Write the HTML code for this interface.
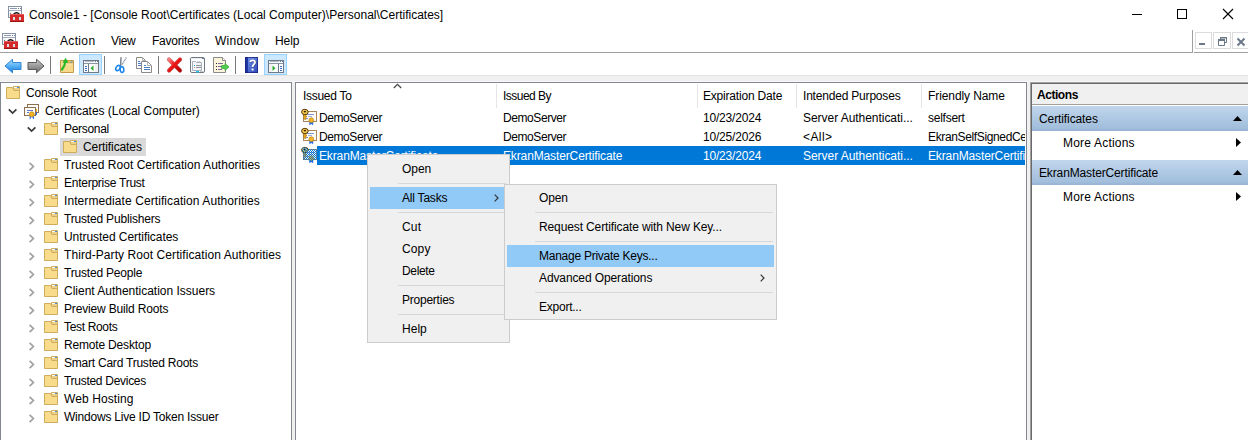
<!DOCTYPE html>
<html><head><meta charset="utf-8">
<style>
*{margin:0;padding:0;box-sizing:border-box}
html,body{width:1248px;height:440px;overflow:hidden;background:#fff;font-family:"Liberation Sans",sans-serif;font-size:12px;color:#000}
.a{position:absolute}
.t{position:absolute;white-space:nowrap;line-height:18px;height:18px}
svg{position:absolute;overflow:visible}
</style></head><body>

<!-- TITLE BAR -->
<div class="a" style="left:0;top:0;width:1248px;height:30px;background:#fff"></div>
<svg id="appicon" style="left:8px;top:6px" width="16" height="17" viewBox="0 0 16 17">
  <rect x="0.5" y="0.5" width="13" height="11" fill="#fff" stroke="#8693a4"/>
  <rect x="2" y="2" width="7" height="1" fill="#8e9aab"/>
  <rect x="10" y="2" width="1" height="1" fill="#6e7a8c"/>
  <rect x="12" y="2" width="1" height="1" fill="#6e7a8c"/>
  <rect x="1" y="4" width="12" height="1" fill="#a4aebc"/>
  <rect x="1" y="5" width="3" height="6" fill="#f0f2f5"/>
  <rect x="2" y="7" width="1" height="1" fill="#6e7a8c"/>
  <path d="M5.5 8.5 Q8.5 5 11.5 8.5" stroke="#111" stroke-width="1.5" fill="none"/>
  <rect x="2" y="8" width="14" height="8" fill="#d42a2a"/>
  <rect x="2" y="8" width="14" height="1" fill="#e85a5a"/>
  <rect x="2" y="15" width="14" height="1" fill="#9a1414"/>
  <rect x="5" y="11" width="2" height="3" fill="#d8e0e0"/>
  <rect x="11" y="11" width="2" height="3" fill="#d8e0e0"/>
</svg>
<div class="t" style="left:29px;top:6px">Console1 - [Console Root\Certificates (Local Computer)\Personal\Certificates]</div>
<div class="a" style="left:1132px;top:14px;width:10px;height:1px;background:#000"></div>
<div class="a" style="left:1177px;top:9px;width:10px;height:10px;border:1px solid #000"></div>
<svg style="left:1223px;top:9px" width="10" height="10" viewBox="0 0 10 10"><path d="M0 0L10 10M10 0L0 10" stroke="#000" stroke-width="1.1"/></svg>

<!-- MENU BAR -->
<svg style="left:2px;top:33px" width="16" height="17" viewBox="0 0 16 17">
  <rect x="0.5" y="0.5" width="13" height="11" fill="#fff" stroke="#8693a4"/>
  <rect x="2" y="2" width="7" height="1" fill="#8e9aab"/>
  <rect x="10" y="2" width="1" height="1" fill="#6e7a8c"/>
  <rect x="12" y="2" width="1" height="1" fill="#6e7a8c"/>
  <rect x="1" y="4" width="12" height="1" fill="#a4aebc"/>
  <rect x="1" y="5" width="3" height="6" fill="#f0f2f5"/>
  <rect x="2" y="7" width="1" height="1" fill="#6e7a8c"/>
  <path d="M5.5 8.5 Q8.5 5 11.5 8.5" stroke="#111" stroke-width="1.5" fill="none"/>
  <rect x="2" y="8" width="14" height="8" fill="#d42a2a"/>
  <rect x="2" y="8" width="14" height="1" fill="#e85a5a"/>
  <rect x="2" y="15" width="14" height="1" fill="#9a1414"/>
  <rect x="5" y="11" width="2" height="3" fill="#d8e0e0"/>
  <rect x="11" y="11" width="2" height="3" fill="#d8e0e0"/>
</svg>
<div class="t" style="left:26px;top:32px;letter-spacing:-0.267px">File</div>
<div class="t" style="left:60px;top:32px;letter-spacing:0.34px">Action</div>
<div class="t" style="left:111px;top:32px;letter-spacing:-0.367px">View</div>
<div class="t" style="left:152px;top:32px;letter-spacing:-0.238px">Favorites</div>
<div class="t" style="left:215px;top:32px;letter-spacing:0.28px">Window</div>
<div class="t" style="left:275px;top:32px;letter-spacing:-0.067px">Help</div>
<div class="a" style="left:0;top:52px;width:1192px;height:1px;background:#a0a0a0"></div>
<div class="a" style="left:1192px;top:30px;width:1px;height:23px;background:#a0a0a0"></div>
<div class="a" style="left:1194px;top:52px;width:54px;height:1px;background:#a0a0a0"></div>
<!-- MDI buttons -->
<div class="a" style="left:1195px;top:32px;width:17px;height:17px;border:1px solid #dcdcdc;background:#fff"></div>
<div class="a" style="left:1213px;top:32px;width:18px;height:17px;border:1px solid #dcdcdc;background:#fff"></div>
<div class="a" style="left:1232px;top:32px;width:18px;height:17px;border:1px solid #dcdcdc;background:#fff"></div>
<div class="a" style="left:1199px;top:43px;width:6px;height:2px;background:#6b7888"></div>
<svg style="left:1218px;top:37px" width="9" height="9" viewBox="0 0 9 9"><path d="M2.5 2.5V0.5H8.5V5.5H6.5M0.5 2.5H6.5V8.5H0.5Z" stroke="#6b7888" fill="none"/><rect x="0" y="2" width="7" height="2" fill="#6b7888"/><rect x="2" y="0" width="7" height="1.5" fill="#6b7888"/></svg>
<svg style="left:1237px;top:38px" width="8" height="8" viewBox="0 0 8 8"><path d="M0.5 0.5L7.5 7.5M7.5 0.5L0.5 7.5" stroke="#6b7888" stroke-width="2"/></svg>

<!-- TOOLBAR -->
<div class="a" style="left:0;top:53px;width:1248px;height:22px;background:#fff"></div>
<div class="a" style="left:0;top:75px;width:1248px;height:1px;background:#e3e3e3"></div>
<div class="a" style="left:0;top:76px;width:1248px;height:364px;background:#f0f0f0"></div>

<!-- toolbar icons -->
<svg style="left:4px;top:58px" width="18" height="16" viewBox="0 0 18 16"><defs><linearGradient id="gb" x1="0" y1="0" x2="0" y2="1"><stop offset="0" stop-color="#b4e2ff"/><stop offset="0.5" stop-color="#55b0f5"/><stop offset="1" stop-color="#1a7ad8"/></linearGradient></defs><path d="M1 8L8.5 1.2V4.5H17V11.5H8.5V14.8Z" fill="url(#gb)" stroke="#2f86d6" stroke-linejoin="round"/></svg>
<svg style="left:27px;top:58px" width="18" height="16" viewBox="0 0 18 16"><defs><linearGradient id="gg" x1="0" y1="0" x2="0" y2="1"><stop offset="0" stop-color="#d0d0d0"/><stop offset="0.5" stop-color="#9a9a9a"/><stop offset="1" stop-color="#6a6a6a"/></linearGradient></defs><path d="M17 8L9.5 1.2V4.5H1V11.5H9.5V14.8Z" fill="url(#gg)" stroke="#5a5a5a" stroke-linejoin="round"/></svg>
<div class="a" style="left:50px;top:56px;width:1px;height:18px;background:#7a7a7a"></div>
<svg style="left:59px;top:57px" width="16" height="17" viewBox="0 0 16 17"><path d="M7.5 3.5H14.5V8H7.5Z" fill="#e9c66a" stroke="#c49c48"/><rect x="11.5" y="4.5" width="2" height="1.3" fill="#3a8ee6"/><path d="M1.5 3.5H6.5L8 6H14.5V15.5H1.5Z" fill="#f6d98a" stroke="#c49c48"/><path d="M2 7H14" stroke="#fbe7ae"/><path d="M3 12.5C4.5 10.5 6 8.5 6.2 5.2" stroke="#2ab82a" stroke-width="2.2" fill="none" stroke-linecap="round"/><path d="M3.5 5.8L6.6 0.8L9.5 5.8Z" fill="#2ab82a"/></svg>
<div class="a" style="left:79px;top:54px;width:23px;height:21px;background:#cce8ff;border:1px solid #99d1ff"></div>
<svg style="left:83px;top:60px" width="16" height="13" viewBox="0 0 16 13"><rect x="0.5" y="0.5" width="15" height="12" fill="#f2f2f2" stroke="#6e7a8a"/><rect x="1" y="1" width="14" height="2" fill="#f6f7f9"/><rect x="2" y="1" width="9" height="1" fill="#b4bcc8"/><rect x="12" y="1" width="1" height="1" fill="#6e7a8a"/><rect x="14" y="1" width="1" height="1" fill="#6e7a8a"/><path d="M1 3.5H15" stroke="#8a95a4"/><rect x="1" y="4" width="4" height="8" fill="#fff"/><path d="M5.5 4V12" stroke="#6e7a8a"/><rect x="6" y="4" width="6" height="8" fill="#fff"/><rect x="2" y="6" width="2" height="1" fill="#3d6ab8"/><rect x="2" y="8" width="2" height="1" fill="#3d6ab8"/><rect x="2" y="10" width="2" height="1" fill="#3d6ab8"/><path d="M10.5 5.5L7.5 8.2L10.5 11Z" fill="#2aaa2a"/></svg>
<div class="a" style="left:104px;top:56px;width:1px;height:18px;background:#7a7a7a"></div>
<svg style="left:114px;top:56px" width="14" height="18" viewBox="0 0 14 18"><path d="M7 1.2L6.6 10" stroke="#7c8590" stroke-width="1.5"/><path d="M12.4 1.5L7.5 9.5" stroke="#8898b0" stroke-width="1.5" stroke-dasharray="1 0.6"/><ellipse cx="4" cy="12" rx="1.9" ry="2.8" transform="rotate(35 4 12)" fill="#fff" stroke="#1a86ec" stroke-width="1.6"/><ellipse cx="8" cy="13.6" rx="1.8" ry="2.9" transform="rotate(-5 8 13.6)" fill="#fff" stroke="#1a86ec" stroke-width="1.6"/></svg>
<svg style="left:136px;top:57px" width="17" height="17" viewBox="0 0 17 17"><path d="M0.5 0.5H6.5L9.5 3.5V11.5H0.5Z" fill="#fff" stroke="#8a8a8a"/><path d="M6.5 0.5V3.5H9.5" fill="none" stroke="#b0b0b0"/><rect x="2" y="4" width="2" height="1" fill="#4a80c8"/><rect x="2" y="6" width="5" height="1" fill="#4a80c8"/><rect x="2" y="8" width="5" height="1" fill="#4a80c8"/><path d="M5.5 4.5H11.5L15.5 8.5V15.5H5.5Z" fill="#fff" stroke="#8a8a8a"/><path d="M11.5 4.5V8.5H15.5" fill="none" stroke="#b0b0b0"/><rect x="8" y="8" width="2" height="1" fill="#4a80c8"/><rect x="8" y="10" width="6" height="1" fill="#4a80c8"/><rect x="8" y="12" width="6" height="1" fill="#4a80c8"/></svg>
<div class="a" style="left:158px;top:56px;width:1px;height:18px;background:#7a7a7a"></div>
<svg style="left:166px;top:57px" width="17" height="16" viewBox="0 0 17 16"><defs><linearGradient id="gx" x1="0" y1="0" x2="1" y2="1"><stop offset="0" stop-color="#ff7a7a"/><stop offset="0.45" stop-color="#f01818"/><stop offset="1" stop-color="#b00000"/></linearGradient></defs><path d="M3 2.5L14 13.5M14 2.5L3 13.5" stroke="#8a0a0a" stroke-opacity="0.55" stroke-width="4.2" stroke-linecap="round"/><path d="M3 2.5L14 13.5M14 2.5L3 13.5" stroke="url(#gx)" stroke-width="3.2" stroke-linecap="round"/></svg>
<svg style="left:190px;top:57px" width="16" height="17" viewBox="0 0 16 17"><rect x="0.5" y="0.5" width="14" height="15" rx="1.5" fill="#fff" stroke="#6f7780"/><rect x="1" y="1" width="13" height="1" fill="#e8ecf0"/><rect x="12" y="1" width="2" height="1" fill="#5a7aa0"/><path d="M2.5 4.5H5.5L6.5 5.5H11.5V13.5H2.5Z" fill="#f4f6f8" stroke="#a8b0bc"/><rect x="7" y="4" width="1.5" height="1" fill="#c8ced6"/><rect x="9" y="4" width="1.5" height="1" fill="#c8ced6"/><rect x="4" y="8" width="1" height="1" fill="#1ab0f0"/><rect x="6" y="8" width="5" height="1" fill="#8a929c"/><rect x="4" y="10" width="1" height="1" fill="#9a8a8a"/><rect x="6" y="10" width="5" height="1" fill="#8a929c"/><rect x="6" y="14" width="3" height="1.5" fill="#20c0f8"/><rect x="10" y="14" width="3" height="1" fill="#c8c8c8"/></svg>
<svg style="left:213px;top:57px" width="17" height="17" viewBox="0 0 17 17"><path d="M0.5 0.5H9.5L12.5 3.5V15.5H0.5Z" fill="#fcf5dc" stroke="#8a8a86"/><path d="M9.5 0.5V3.5H12.5" fill="#fff" stroke="#8a8a86"/><rect x="3" y="6" width="1" height="1" fill="#2a2a2a"/><rect x="3" y="9" width="1" height="1" fill="#2a2a2a"/><rect x="3" y="12" width="1" height="1" fill="#2a2a2a"/><rect x="5" y="6" width="5" height="1" fill="#7a6aa0"/><rect x="5" y="9" width="4" height="1" fill="#7a6aa0"/><rect x="5" y="12" width="4" height="1" fill="#7a6aa0"/><path d="M8.5 8.5H12V6.5L16 10L12 13.5V11.5H8.5Z" fill="#52cc52" stroke="#34a834" stroke-width="0.7"/></svg>
<div class="a" style="left:235px;top:56px;width:1px;height:18px;background:#7a7a7a"></div>
<svg style="left:245px;top:57px" width="13" height="16" viewBox="0 0 13 16"><defs><linearGradient id="gh" x1="0" y1="0" x2="1" y2="1"><stop offset="0" stop-color="#7a98ec"/><stop offset="1" stop-color="#2a48b8"/></linearGradient></defs><rect x="0" y="0" width="13" height="16" fill="url(#gh)"/><rect x="0" y="0" width="3" height="16" fill="#1e36a0"/><rect x="0.5" y="0.5" width="12" height="15" fill="none" stroke="#14207a" stroke-opacity="0.7"/><path d="M5.3 5C5.3 2.8 10 2.6 10 5.3C10 7.5 7.6 7.5 7.6 10" stroke="#3a4a90" stroke-width="1.9" fill="none" transform="translate(0.6 0.5)"/><path d="M5.3 5C5.3 2.8 10 2.6 10 5.3C10 7.5 7.6 7.5 7.6 10" stroke="#fff" stroke-width="1.8" fill="none"/><rect x="6.6" y="11.5" width="2" height="2" fill="#fff"/></svg>
<div class="a" style="left:264px;top:54px;width:23px;height:21px;background:#cce8ff;border:1px solid #99d1ff"></div>
<svg style="left:268px;top:60px" width="16" height="13" viewBox="0 0 16 13"><rect x="0.5" y="0.5" width="15" height="12" fill="#f2f2f2" stroke="#6e7a8a"/><rect x="1" y="1" width="14" height="2" fill="#f6f7f9"/><rect x="2" y="1" width="9" height="1" fill="#b4bcc8"/><rect x="12" y="1" width="1" height="1" fill="#6e7a8a"/><rect x="14" y="1" width="1" height="1" fill="#6e7a8a"/><path d="M1 3.5H15" stroke="#8a95a4"/><rect x="11" y="4" width="4" height="8" fill="#fff"/><path d="M10.5 4V12" stroke="#6e7a8a"/><rect x="4" y="4" width="6" height="8" fill="#fff"/><rect x="12" y="6" width="2" height="1" fill="#3d6ab8"/><rect x="12" y="8" width="2" height="1" fill="#3d6ab8"/><rect x="12" y="10" width="2" height="1" fill="#3d6ab8"/><path d="M4.5 5.5L7.5 8.2L4.5 11Z" fill="#2aaa2a"/></svg>

<!-- PANES -->
<div class="a" style="left:0;top:81px;width:1248px;height:1px;background:#f8f8f8"></div>
<div class="a" style="left:0;top:82px;width:292px;height:400px;border:1px solid #828790;background:#fff"></div>
<div class="a" style="left:295px;top:82px;width:732px;height:400px;border:1px solid #828790;background:#fff"></div>
<div class="a" style="left:1030px;top:82px;width:230px;height:400px;border-top:1px solid #a0a0a0;border-left:1px solid #a0a0a0;background:#696969"></div>
<div class="a" style="left:1031px;top:83px;width:230px;height:400px;border-top:1px solid #696969;border-left:1px solid #696969;background:#fff"></div>
<svg style="left:6px;top:86px" width="14" height="13" viewBox="0 0 14 13"><path d="M7.5 0.5H13.5V5H7.5Z" fill="#ecd08a" stroke="#cfac5c"/><rect x="8" y="1" width="5" height="1" fill="#fff"/><rect x="11" y="1" width="2" height="1" fill="#3a8ee6"/><path d="M0.5 1.5H6.5L8 4.5H13.5V12.5H0.5Z" fill="#f8dc8c" stroke="#cfac5c"/></svg>
<div class="t" style="left:26px;top:84px;letter-spacing:-0.191px">Console Root</div>
<svg style="left:8px;top:108px" width="10" height="7" viewBox="0 0 10 7"><path d="M0.8 1.3L4.6 5.1L8.4 1.3" stroke="#3a3a3a" stroke-width="1.7" fill="none"/></svg>
<svg style="left:24px;top:104px" width="16" height="16" viewBox="0 0 16 16"><rect x="3.5" y="0.5" width="11" height="8" fill="#fdfbf3" stroke="#8a7050"/><rect x="11" y="5" width="2" height="3" fill="#f0b020"/><rect x="11" y="8" width="2" height="3" fill="#2a6ee8"/><rect x="0.5" y="3.5" width="11" height="8" fill="#fdfbf3" stroke="#8a7050"/><rect x="3" y="6" width="6" height="1" fill="#5b7ad0"/><rect x="3" y="8" width="2" height="1" fill="#5b7ad0"/><path d="M5.6 11.5L5.6 15.2L7 14.2L7.3 12Z" fill="#2a6ee8"/><path d="M8.4 12L8.6 14.2L10 15.2L10 11.5Z" fill="#2a6ee8"/><circle cx="7.8" cy="10.3" r="2.5" fill="#f2b424" stroke="#b88010" stroke-width="0.6"/></svg>
<div class="t" style="left:45px;top:102px;letter-spacing:-0.043px">Certificates (Local Computer)</div>
<svg style="left:27px;top:126px" width="10" height="7" viewBox="0 0 10 7"><path d="M0.8 1.3L4.6 5.1L8.4 1.3" stroke="#3a3a3a" stroke-width="1.7" fill="none"/></svg>
<svg style="left:44px;top:122px" width="14" height="13" viewBox="0 0 14 13"><path d="M7.5 0.5H13.5V5H7.5Z" fill="#ecd08a" stroke="#cfac5c"/><rect x="8" y="1" width="5" height="1" fill="#fff"/><rect x="11" y="1" width="2" height="1" fill="#3a8ee6"/><path d="M0.5 1.5H6.5L8 4.5H13.5V12.5H0.5Z" fill="#f8dc8c" stroke="#cfac5c"/></svg>
<div class="t" style="left:64px;top:120px;letter-spacing:-0.314px">Personal</div>
<div class="a" style="left:60px;top:138px;width:86px;height:18px;background:#d9d9d9"></div>
<svg style="left:63px;top:140px" width="14" height="13" viewBox="0 0 14 13"><path d="M7.5 0.5H13.5V5H7.5Z" fill="#ecd08a" stroke="#cfac5c"/><rect x="8" y="1" width="5" height="1" fill="#fff"/><rect x="11" y="1" width="2" height="1" fill="#3a8ee6"/><path d="M0.5 1.5H6.5L8 4.5H13.5V12.5H0.5Z" fill="#f8dc8c" stroke="#cfac5c"/></svg>
<div class="t" style="left:83px;top:138px;letter-spacing:-0.1px">Certificates</div>
<svg style="left:29px;top:162px" width="6" height="9" viewBox="0 0 6 9"><path d="M0.6 0.8L4.4 4.5L0.6 8.2" stroke="#a0a0a0" stroke-width="1.7" fill="none"/></svg>
<svg style="left:44px;top:158px" width="14" height="13" viewBox="0 0 14 13"><path d="M7.5 0.5H13.5V5H7.5Z" fill="#ecd08a" stroke="#cfac5c"/><rect x="8" y="1" width="5" height="1" fill="#fff"/><rect x="11" y="1" width="2" height="1" fill="#3a8ee6"/><path d="M0.5 1.5H6.5L8 4.5H13.5V12.5H0.5Z" fill="#f8dc8c" stroke="#cfac5c"/></svg>
<div class="t" style="left:64px;top:156px;letter-spacing:0.03px">Trusted Root Certification Authorities</div>
<svg style="left:29px;top:180px" width="6" height="9" viewBox="0 0 6 9"><path d="M0.6 0.8L4.4 4.5L0.6 8.2" stroke="#a0a0a0" stroke-width="1.7" fill="none"/></svg>
<svg style="left:44px;top:176px" width="14" height="13" viewBox="0 0 14 13"><path d="M7.5 0.5H13.5V5H7.5Z" fill="#ecd08a" stroke="#cfac5c"/><rect x="8" y="1" width="5" height="1" fill="#fff"/><rect x="11" y="1" width="2" height="1" fill="#3a8ee6"/><path d="M0.5 1.5H6.5L8 4.5H13.5V12.5H0.5Z" fill="#f8dc8c" stroke="#cfac5c"/></svg>
<div class="t" style="left:64px;top:174px;letter-spacing:-0.253px">Enterprise Trust</div>
<svg style="left:29px;top:198px" width="6" height="9" viewBox="0 0 6 9"><path d="M0.6 0.8L4.4 4.5L0.6 8.2" stroke="#a0a0a0" stroke-width="1.7" fill="none"/></svg>
<svg style="left:44px;top:194px" width="14" height="13" viewBox="0 0 14 13"><path d="M7.5 0.5H13.5V5H7.5Z" fill="#ecd08a" stroke="#cfac5c"/><rect x="8" y="1" width="5" height="1" fill="#fff"/><rect x="11" y="1" width="2" height="1" fill="#3a8ee6"/><path d="M0.5 1.5H6.5L8 4.5H13.5V12.5H0.5Z" fill="#f8dc8c" stroke="#cfac5c"/></svg>
<div class="t" style="left:64px;top:192px;letter-spacing:0.084px">Intermediate Certification Authorities</div>
<svg style="left:29px;top:216px" width="6" height="9" viewBox="0 0 6 9"><path d="M0.6 0.8L4.4 4.5L0.6 8.2" stroke="#a0a0a0" stroke-width="1.7" fill="none"/></svg>
<svg style="left:44px;top:212px" width="14" height="13" viewBox="0 0 14 13"><path d="M7.5 0.5H13.5V5H7.5Z" fill="#ecd08a" stroke="#cfac5c"/><rect x="8" y="1" width="5" height="1" fill="#fff"/><rect x="11" y="1" width="2" height="1" fill="#3a8ee6"/><path d="M0.5 1.5H6.5L8 4.5H13.5V12.5H0.5Z" fill="#f8dc8c" stroke="#cfac5c"/></svg>
<div class="t" style="left:64px;top:210px;letter-spacing:-0.182px">Trusted Publishers</div>
<svg style="left:29px;top:234px" width="6" height="9" viewBox="0 0 6 9"><path d="M0.6 0.8L4.4 4.5L0.6 8.2" stroke="#a0a0a0" stroke-width="1.7" fill="none"/></svg>
<svg style="left:44px;top:230px" width="14" height="13" viewBox="0 0 14 13"><path d="M7.5 0.5H13.5V5H7.5Z" fill="#ecd08a" stroke="#cfac5c"/><rect x="8" y="1" width="5" height="1" fill="#fff"/><rect x="11" y="1" width="2" height="1" fill="#3a8ee6"/><path d="M0.5 1.5H6.5L8 4.5H13.5V12.5H0.5Z" fill="#f8dc8c" stroke="#cfac5c"/></svg>
<div class="t" style="left:64px;top:228px;letter-spacing:-0.052px">Untrusted Certificates</div>
<svg style="left:29px;top:252px" width="6" height="9" viewBox="0 0 6 9"><path d="M0.6 0.8L4.4 4.5L0.6 8.2" stroke="#a0a0a0" stroke-width="1.7" fill="none"/></svg>
<svg style="left:44px;top:248px" width="14" height="13" viewBox="0 0 14 13"><path d="M7.5 0.5H13.5V5H7.5Z" fill="#ecd08a" stroke="#cfac5c"/><rect x="8" y="1" width="5" height="1" fill="#fff"/><rect x="11" y="1" width="2" height="1" fill="#3a8ee6"/><path d="M0.5 1.5H6.5L8 4.5H13.5V12.5H0.5Z" fill="#f8dc8c" stroke="#cfac5c"/></svg>
<div class="t" style="left:64px;top:246px;letter-spacing:0.073px">Third-Party Root Certification Authorities</div>
<svg style="left:29px;top:270px" width="6" height="9" viewBox="0 0 6 9"><path d="M0.6 0.8L4.4 4.5L0.6 8.2" stroke="#a0a0a0" stroke-width="1.7" fill="none"/></svg>
<svg style="left:44px;top:266px" width="14" height="13" viewBox="0 0 14 13"><path d="M7.5 0.5H13.5V5H7.5Z" fill="#ecd08a" stroke="#cfac5c"/><rect x="8" y="1" width="5" height="1" fill="#fff"/><rect x="11" y="1" width="2" height="1" fill="#3a8ee6"/><path d="M0.5 1.5H6.5L8 4.5H13.5V12.5H0.5Z" fill="#f8dc8c" stroke="#cfac5c"/></svg>
<div class="t" style="left:64px;top:264px;letter-spacing:-0.192px">Trusted People</div>
<svg style="left:29px;top:288px" width="6" height="9" viewBox="0 0 6 9"><path d="M0.6 0.8L4.4 4.5L0.6 8.2" stroke="#a0a0a0" stroke-width="1.7" fill="none"/></svg>
<svg style="left:44px;top:284px" width="14" height="13" viewBox="0 0 14 13"><path d="M7.5 0.5H13.5V5H7.5Z" fill="#ecd08a" stroke="#cfac5c"/><rect x="8" y="1" width="5" height="1" fill="#fff"/><rect x="11" y="1" width="2" height="1" fill="#3a8ee6"/><path d="M0.5 1.5H6.5L8 4.5H13.5V12.5H0.5Z" fill="#f8dc8c" stroke="#cfac5c"/></svg>
<div class="t" style="left:64px;top:282px;letter-spacing:-0.011px">Client Authentication Issuers</div>
<svg style="left:29px;top:306px" width="6" height="9" viewBox="0 0 6 9"><path d="M0.6 0.8L4.4 4.5L0.6 8.2" stroke="#a0a0a0" stroke-width="1.7" fill="none"/></svg>
<svg style="left:44px;top:302px" width="14" height="13" viewBox="0 0 14 13"><path d="M7.5 0.5H13.5V5H7.5Z" fill="#ecd08a" stroke="#cfac5c"/><rect x="8" y="1" width="5" height="1" fill="#fff"/><rect x="11" y="1" width="2" height="1" fill="#3a8ee6"/><path d="M0.5 1.5H6.5L8 4.5H13.5V12.5H0.5Z" fill="#f8dc8c" stroke="#cfac5c"/></svg>
<div class="t" style="left:64px;top:300px;letter-spacing:-0.161px">Preview Build Roots</div>
<svg style="left:29px;top:324px" width="6" height="9" viewBox="0 0 6 9"><path d="M0.6 0.8L4.4 4.5L0.6 8.2" stroke="#a0a0a0" stroke-width="1.7" fill="none"/></svg>
<svg style="left:44px;top:320px" width="14" height="13" viewBox="0 0 14 13"><path d="M7.5 0.5H13.5V5H7.5Z" fill="#ecd08a" stroke="#cfac5c"/><rect x="8" y="1" width="5" height="1" fill="#fff"/><rect x="11" y="1" width="2" height="1" fill="#3a8ee6"/><path d="M0.5 1.5H6.5L8 4.5H13.5V12.5H0.5Z" fill="#f8dc8c" stroke="#cfac5c"/></svg>
<div class="t" style="left:64px;top:318px;letter-spacing:-0.333px">Test Roots</div>
<svg style="left:29px;top:342px" width="6" height="9" viewBox="0 0 6 9"><path d="M0.6 0.8L4.4 4.5L0.6 8.2" stroke="#a0a0a0" stroke-width="1.7" fill="none"/></svg>
<svg style="left:44px;top:338px" width="14" height="13" viewBox="0 0 14 13"><path d="M7.5 0.5H13.5V5H7.5Z" fill="#ecd08a" stroke="#cfac5c"/><rect x="8" y="1" width="5" height="1" fill="#fff"/><rect x="11" y="1" width="2" height="1" fill="#3a8ee6"/><path d="M0.5 1.5H6.5L8 4.5H13.5V12.5H0.5Z" fill="#f8dc8c" stroke="#cfac5c"/></svg>
<div class="t" style="left:64px;top:336px;letter-spacing:-0.177px">Remote Desktop</div>
<svg style="left:29px;top:360px" width="6" height="9" viewBox="0 0 6 9"><path d="M0.6 0.8L4.4 4.5L0.6 8.2" stroke="#a0a0a0" stroke-width="1.7" fill="none"/></svg>
<svg style="left:44px;top:356px" width="14" height="13" viewBox="0 0 14 13"><path d="M7.5 0.5H13.5V5H7.5Z" fill="#ecd08a" stroke="#cfac5c"/><rect x="8" y="1" width="5" height="1" fill="#fff"/><rect x="11" y="1" width="2" height="1" fill="#3a8ee6"/><path d="M0.5 1.5H6.5L8 4.5H13.5V12.5H0.5Z" fill="#f8dc8c" stroke="#cfac5c"/></svg>
<div class="t" style="left:64px;top:354px;letter-spacing:-0.226px">Smart Card Trusted Roots</div>
<svg style="left:29px;top:378px" width="6" height="9" viewBox="0 0 6 9"><path d="M0.6 0.8L4.4 4.5L0.6 8.2" stroke="#a0a0a0" stroke-width="1.7" fill="none"/></svg>
<svg style="left:44px;top:374px" width="14" height="13" viewBox="0 0 14 13"><path d="M7.5 0.5H13.5V5H7.5Z" fill="#ecd08a" stroke="#cfac5c"/><rect x="8" y="1" width="5" height="1" fill="#fff"/><rect x="11" y="1" width="2" height="1" fill="#3a8ee6"/><path d="M0.5 1.5H6.5L8 4.5H13.5V12.5H0.5Z" fill="#f8dc8c" stroke="#cfac5c"/></svg>
<div class="t" style="left:64px;top:372px;letter-spacing:-0.286px">Trusted Devices</div>
<svg style="left:29px;top:396px" width="6" height="9" viewBox="0 0 6 9"><path d="M0.6 0.8L4.4 4.5L0.6 8.2" stroke="#a0a0a0" stroke-width="1.7" fill="none"/></svg>
<svg style="left:44px;top:392px" width="14" height="13" viewBox="0 0 14 13"><path d="M7.5 0.5H13.5V5H7.5Z" fill="#ecd08a" stroke="#cfac5c"/><rect x="8" y="1" width="5" height="1" fill="#fff"/><rect x="11" y="1" width="2" height="1" fill="#3a8ee6"/><path d="M0.5 1.5H6.5L8 4.5H13.5V12.5H0.5Z" fill="#f8dc8c" stroke="#cfac5c"/></svg>
<div class="t" style="left:64px;top:390px;letter-spacing:0.09px">Web Hosting</div>
<svg style="left:29px;top:414px" width="6" height="9" viewBox="0 0 6 9"><path d="M0.6 0.8L4.4 4.5L0.6 8.2" stroke="#a0a0a0" stroke-width="1.7" fill="none"/></svg>
<svg style="left:44px;top:410px" width="14" height="13" viewBox="0 0 14 13"><path d="M7.5 0.5H13.5V5H7.5Z" fill="#ecd08a" stroke="#cfac5c"/><rect x="8" y="1" width="5" height="1" fill="#fff"/><rect x="11" y="1" width="2" height="1" fill="#3a8ee6"/><path d="M0.5 1.5H6.5L8 4.5H13.5V12.5H0.5Z" fill="#f8dc8c" stroke="#cfac5c"/></svg>
<div class="t" style="left:64px;top:408px;letter-spacing:-0.215px">Windows Live ID Token Issuer</div>
<!-- LIST PANE -->
<div class="a" style="left:296px;top:83px;width:729px;height:357px;overflow:hidden">
<div class="t" style="left:7px;top:4px;letter-spacing:-0.287px">Issued To</div>
<div class="t" style="left:207px;top:4px;letter-spacing:-0.512px">Issued By</div>
<div class="t" style="left:407px;top:4px;letter-spacing:-0.193px">Expiration Date</div>
<div class="t" style="left:507px;top:4px;letter-spacing:-0.194px">Intended Purposes</div>
<div class="t" style="left:632px;top:4px;letter-spacing:-0.092px">Friendly Name</div>
<div class="a" style="left:200px;top:1px;width:1px;height:24px;background:#e5e5e5"></div>
<div class="a" style="left:401px;top:1px;width:1px;height:24px;background:#e5e5e5"></div>
<div class="a" style="left:500px;top:1px;width:1px;height:24px;background:#e5e5e5"></div>
<div class="a" style="left:625px;top:1px;width:1px;height:24px;background:#e5e5e5"></div>
<svg style="left:97px;top:0px" width="9" height="6" viewBox="0 0 9 6"><path d="M0.8 5L4.5 1.3L8.2 5" stroke="#4a4a4a" stroke-width="1.3" fill="none"/></svg>
<svg style="left:5px;top:26px" width="16" height="17" viewBox="0 0 16 17"><rect x="2.5" y="2.5" width="13" height="10" fill="#fffdf6" stroke="#a8865e"/><rect x="5" y="5" width="8" height="1" fill="#7d96d8"/><rect x="7" y="7" width="4" height="1" fill="#9fb2e0"/><rect x="5" y="9" width="2" height="1" fill="#7d96d8"/><path d="M8.2 13L8.4 16.3L10.2 15L12 16.3L12.4 13Z" fill="#2a6ee8"/><circle cx="10.3" cy="11.2" r="2.4" fill="#f2b428" stroke="#c08818" stroke-width="0.7"/><path d="M2.6 4.5H5V10.5H3.8L2.6 9.5Z" fill="#eaa820" stroke="#9a6a10" stroke-width="0.5"/><rect x="5" y="7" width="1" height="1.2" fill="#c88a18"/><ellipse cx="3.9" cy="3" rx="3.3" ry="2.7" fill="#f8cc50" stroke="#5a3a08" stroke-width="1"/><ellipse cx="3.9" cy="2.6" rx="1.2" ry="0.9" fill="#3a2806"/></svg>
<div class="t" style="left:23px;top:26px;;line-height:19px;height:19px;letter-spacing:-0.422px">DemoServer</div>
<div class="t" style="left:207px;top:26px;;line-height:19px;height:19px;letter-spacing:-0.422px">DemoServer</div>
<div class="t" style="left:407px;top:26px;;line-height:19px;height:19px;letter-spacing:-0.189px">10/23/2024</div>
<div class="t" style="left:507px;top:26px;;line-height:19px;height:19px;letter-spacing:-0.043px">Server Authenticati...</div>
<div class="t" style="left:632px;top:26px;;line-height:19px;height:19px;letter-spacing:-0.257px">selfsert</div>
<svg style="left:5px;top:45px" width="16" height="17" viewBox="0 0 16 17"><rect x="2.5" y="2.5" width="13" height="10" fill="#fffdf6" stroke="#a8865e"/><rect x="5" y="5" width="8" height="1" fill="#7d96d8"/><rect x="7" y="7" width="4" height="1" fill="#9fb2e0"/><rect x="5" y="9" width="2" height="1" fill="#7d96d8"/><path d="M8.2 13L8.4 16.3L10.2 15L12 16.3L12.4 13Z" fill="#2a6ee8"/><circle cx="10.3" cy="11.2" r="2.4" fill="#f2b428" stroke="#c08818" stroke-width="0.7"/><path d="M2.6 4.5H5V10.5H3.8L2.6 9.5Z" fill="#eaa820" stroke="#9a6a10" stroke-width="0.5"/><rect x="5" y="7" width="1" height="1.2" fill="#c88a18"/><ellipse cx="3.9" cy="3" rx="3.3" ry="2.7" fill="#f8cc50" stroke="#5a3a08" stroke-width="1"/><ellipse cx="3.9" cy="2.6" rx="1.2" ry="0.9" fill="#3a2806"/></svg>
<div class="t" style="left:23px;top:45px;;line-height:19px;height:19px;letter-spacing:-0.422px">DemoServer</div>
<div class="t" style="left:207px;top:45px;;line-height:19px;height:19px;letter-spacing:-0.422px">DemoServer</div>
<div class="t" style="left:407px;top:45px;;line-height:19px;height:19px;letter-spacing:-0.189px">10/25/2026</div>
<div class="t" style="left:507px;top:45px;;line-height:19px;height:19px;letter-spacing:0.4px">&lt;All&gt;</div>
<div class="t" style="left:632px;top:45px;;line-height:19px;height:19px;letter-spacing:-0.36px">EkranSelfSignedCertificate</div>
<div class="a" style="left:21px;top:63px;width:708px;height:19px;background:#0078d7"></div>
<svg style="left:5px;top:64px" width="16" height="17" viewBox="0 0 16 17"><rect x="2.5" y="2.5" width="13" height="10" fill="#fffdf6" stroke="#a8865e"/><rect x="5" y="5" width="8" height="1" fill="#7d96d8"/><rect x="7" y="7" width="4" height="1" fill="#9fb2e0"/><rect x="5" y="9" width="2" height="1" fill="#7d96d8"/><path d="M8.2 13L8.4 16.3L10.2 15L12 16.3L12.4 13Z" fill="#2a6ee8"/><circle cx="10.3" cy="11.2" r="2.4" fill="#f2b428" stroke="#c08818" stroke-width="0.7"/><path d="M2.6 4.5H5V10.5H3.8L2.6 9.5Z" fill="#eaa820" stroke="#9a6a10" stroke-width="0.5"/><rect x="5" y="7" width="1" height="1.2" fill="#c88a18"/><ellipse cx="3.9" cy="3" rx="3.3" ry="2.7" fill="#f8cc50" stroke="#5a3a08" stroke-width="1"/><ellipse cx="3.9" cy="2.6" rx="1.2" ry="0.9" fill="#3a2806"/></svg>
<svg style="left:5px;top:64px" width="16" height="17"><defs><pattern id="dith" width="2" height="2" patternUnits="userSpaceOnUse"><rect x="0" y="0" width="1" height="1" fill="#0078d7"/><rect x="1" y="1" width="1" height="1" fill="#0078d7"/></pattern></defs><rect x="2" y="2" width="14" height="11" fill="url(#dith)"/><circle cx="3.8" cy="3" r="3" fill="url(#dith)"/><circle cx="10.2" cy="12.2" r="2.6" fill="url(#dith)"/></svg>
<div class="t" style="left:23px;top:64px;color:#fff;line-height:19px;height:19px;letter-spacing:-0.129px">EkranMasterCertificate</div>
<div class="t" style="left:207px;top:64px;color:#fff;line-height:19px;height:19px;letter-spacing:-0.129px">EkranMasterCertificate</div>
<div class="t" style="left:407px;top:64px;color:#fff;line-height:19px;height:19px;letter-spacing:-0.189px">10/23/2024</div>
<div class="t" style="left:507px;top:64px;color:#fff;line-height:19px;height:19px;letter-spacing:-0.043px">Server Authenticati...</div>
<div class="t" style="left:632px;top:64px;color:#fff;line-height:19px;height:19px;letter-spacing:-0.129px">EkranMasterCertificate</div>
</div>
<!-- ACTIONS -->
<div class="a" style="left:1032px;top:84px;width:216px;height:20px;background:#f0f0f0"></div>
<div class="a" style="left:1032px;top:104px;width:216px;height:1px;background:#a0a0a0"></div>
<div class="t" style="left:1037px;top:86px;font-weight:bold;letter-spacing:-0.45px">Actions</div>
<div class="a" style="left:1032px;top:106px;width:216px;height:25px;background:linear-gradient(#c0d6ec,#a2bedc 88%,#94b2d4)"></div>
<div class="t" style="left:1039px;top:110px;letter-spacing:-0.1px">Certificates</div>
<svg style="left:1233px;top:116px" width="9" height="5" viewBox="0 0 9 5"><path d="M0 5L4.5 0L9 5Z" fill="#000"/></svg>
<div class="t" style="left:1063px;top:134px;letter-spacing:0.195px">More Actions</div>
<svg style="left:1236px;top:138px" width="5" height="9" viewBox="0 0 5 9"><path d="M0 0L5 4.5L0 9Z" fill="#000"/></svg>
<div class="a" style="left:1032px;top:160px;width:216px;height:25px;background:linear-gradient(#c0d6ec,#a2bedc 88%,#94b2d4)"></div>
<div class="t" style="left:1039px;top:164px;letter-spacing:-0.136px">EkranMasterCertificate</div>
<svg style="left:1233px;top:170px" width="9" height="5" viewBox="0 0 9 5"><path d="M0 5L4.5 0L9 5Z" fill="#000"/></svg>
<div class="t" style="left:1063px;top:188px;letter-spacing:0.195px">More Actions</div>
<svg style="left:1236px;top:192px" width="5" height="9" viewBox="0 0 5 9"><path d="M0 0L5 4.5L0 9Z" fill="#000"/></svg>
<!-- MENU1 -->
<div class="a" style="left:367px;top:154px;width:143px;height:189px;background:#f0f0f0;border:1px solid #cccccc"></div>
<div class="a" style="left:370px;top:187px;width:134px;height:22px;background:#91c9f7"></div>
<div class="t" style="left:402px;top:158px;line-height:22px;height:22px;letter-spacing:-0.033px">Open</div>
<div class="a" style="left:398px;top:183px;width:108px;height:1px;background:#d7d7d7"></div>
<div class="t" style="left:402px;top:187px;line-height:22px;height:22px;letter-spacing:-0.213px">All Tasks</div>
<svg style="left:494px;top:194px" width="5" height="8" viewBox="0 0 5 8"><path d="M0.7 0.7L4 4L0.7 7.3" stroke="#333" stroke-width="1.2" fill="none"/></svg>
<div class="a" style="left:398px;top:212px;width:108px;height:1px;background:#d7d7d7"></div>
<div class="t" style="left:402px;top:216px;line-height:22px;height:22px;letter-spacing:0.15px">Cut</div>
<div class="t" style="left:402px;top:238px;line-height:22px;height:22px;letter-spacing:0.133px">Copy</div>
<div class="t" style="left:402px;top:260px;line-height:22px;height:22px;letter-spacing:-0.34px">Delete</div>
<div class="a" style="left:398px;top:285px;width:108px;height:1px;background:#d7d7d7"></div>
<div class="t" style="left:402px;top:289px;line-height:22px;height:22px;letter-spacing:-0.233px">Properties</div>
<div class="a" style="left:398px;top:314px;width:108px;height:1px;background:#d7d7d7"></div>
<div class="t" style="left:402px;top:318px;line-height:22px;height:22px;letter-spacing:0.033px">Help</div>
<!-- SUBMENU -->
<div class="a" style="left:504px;top:184px;width:273px;height:136px;background:#f0f0f0;border:1px solid #cccccc"></div>
<div class="t" style="left:539px;top:187px;line-height:22px;height:22px;letter-spacing:-0.133px">Open</div>
<div class="a" style="left:535px;top:212px;width:238px;height:1px;background:#d7d7d7"></div>
<div class="t" style="left:539px;top:216px;line-height:22px;height:22px;letter-spacing:-0.121px">Request Certificate with New Key...</div>
<div class="a" style="left:535px;top:241px;width:238px;height:1px;background:#d7d7d7"></div>
<div class="a" style="left:507px;top:245px;width:267px;height:22px;background:#91c9f7"></div>
<div class="t" style="left:539px;top:245px;line-height:22px;height:22px;letter-spacing:-0.252px">Manage Private Keys...</div>
<div class="t" style="left:539px;top:267px;line-height:22px;height:22px;letter-spacing:-0.111px">Advanced Operations</div>
<svg style="left:760px;top:274px" width="5" height="8" viewBox="0 0 5 8"><path d="M0.7 0.7L4 4L0.7 7.3" stroke="#333" stroke-width="1.2" fill="none"/></svg>
<div class="a" style="left:535px;top:292px;width:238px;height:1px;background:#d7d7d7"></div>
<div class="t" style="left:539px;top:296px;line-height:22px;height:22px;letter-spacing:-0.237px">Export...</div>
</body></html>
